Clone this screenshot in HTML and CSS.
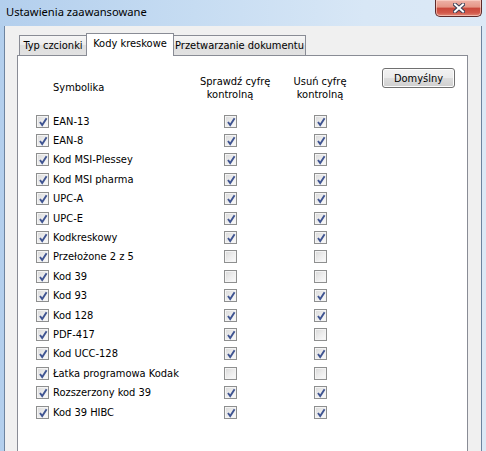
FILE: index.html
```html
<!DOCTYPE html>
<html>
<head>
<meta charset="utf-8">
<link rel="stylesheet" href="styles.css">
</head>
<body>
<div class="window">
  <div class="titlebar">
    <span class="title">Ustawienia zaawansowane</span>
    <span class="close">
      <svg width="12" height="10" viewBox="0 0 12 10"><path d="M2 1.5 L10 8.5 M10 1.5 L2 8.5" stroke="#3a3f55" stroke-width="4" stroke-linecap="square" fill="none"/><path d="M2 1.5 L10 8.5 M10 1.5 L2 8.5" stroke="#fff" stroke-width="2" stroke-linecap="square" fill="none"/></svg>
    </span>
  </div>
  <div class="client">
    <div class="tabs">
      <div class="tab t1">Typ czcionki</div>
      <div class="tab t2 sel">Kody kreskowe</div>
      <div class="tab t3">Przetwarzanie dokumentu</div>
    </div>
    <div class="panel">
      <div class="grid">
        <div class="hsym">Symbolika</div>
        <div class="hcol">Sprawdź cyfrę<br>kontrolną</div>
        <div class="hcol">Usuń cyfrę<br>kontrolną</div>
        <button class="btn">Domyślny</button>

        <div class="lab"><span class="cb on"></span>EAN-13</div><div class="c"><span class="cb on"></span></div><div class="c"><span class="cb on"></span></div><div></div>
        <div class="lab"><span class="cb on"></span>EAN-8</div><div class="c"><span class="cb on"></span></div><div class="c"><span class="cb on"></span></div><div></div>
        <div class="lab"><span class="cb on"></span>Kod MSI-Plessey</div><div class="c"><span class="cb on"></span></div><div class="c"><span class="cb on"></span></div><div></div>
        <div class="lab"><span class="cb on"></span>Kod MSI pharma</div><div class="c"><span class="cb on"></span></div><div class="c"><span class="cb on"></span></div><div></div>
        <div class="lab"><span class="cb on"></span>UPC-A</div><div class="c"><span class="cb on"></span></div><div class="c"><span class="cb on"></span></div><div></div>
        <div class="lab"><span class="cb on"></span>UPC-E</div><div class="c"><span class="cb on"></span></div><div class="c"><span class="cb on"></span></div><div></div>
        <div class="lab"><span class="cb on"></span>Kodkreskowy</div><div class="c"><span class="cb on"></span></div><div class="c"><span class="cb on"></span></div><div></div>
        <div class="lab"><span class="cb on"></span>Przełożone 2 z 5</div><div class="c"><span class="cb"></span></div><div class="c"><span class="cb"></span></div><div></div>
        <div class="lab"><span class="cb on"></span>Kod 39</div><div class="c"><span class="cb"></span></div><div class="c"><span class="cb"></span></div><div></div>
        <div class="lab"><span class="cb on"></span>Kod 93</div><div class="c"><span class="cb on"></span></div><div class="c"><span class="cb on"></span></div><div></div>
        <div class="lab"><span class="cb on"></span>Kod 128</div><div class="c"><span class="cb on"></span></div><div class="c"><span class="cb on"></span></div><div></div>
        <div class="lab"><span class="cb on"></span>PDF-417</div><div class="c"><span class="cb on"></span></div><div class="c"><span class="cb"></span></div><div></div>
        <div class="lab"><span class="cb on"></span>Kod UCC-128</div><div class="c"><span class="cb on"></span></div><div class="c"><span class="cb on"></span></div><div></div>
        <div class="lab"><span class="cb on"></span>Łatka programowa Kodak</div><div class="c"><span class="cb"></span></div><div class="c"><span class="cb"></span></div><div></div>
        <div class="lab"><span class="cb on"></span>Rozszerzony kod 39</div><div class="c"><span class="cb on"></span></div><div class="c"><span class="cb on"></span></div><div></div>
        <div class="lab"><span class="cb on"></span>Kod 39 HIBC</div><div class="c"><span class="cb on"></span></div><div class="c"><span class="cb on"></span></div><div></div>
      </div>
    </div>
  </div>
</div>
</body>
</html>
```
FILE: styles.css
```css
html, body {
  margin: 0;
  padding: 0;
  width: 486px;
  height: 451px;
  overflow: hidden;
}
body {
  background: linear-gradient(to right, #b3cfed 0%, #c6dcf2 40%, #d8e7f6 75%, #dce9f6 100%);
}
.window {
  display: flex;
  flex-direction: column;
  height: 451px;
}
.titlebar {
  height: 26px;
  display: flex;
  justify-content: space-between;
  align-items: flex-start;
  flex: none;
}
.title {
  font-family: "Noto Sans", "Open Sans", sans-serif;
  font-size: 11.2px;
  color: #000;
  margin: 4px 0 0 6px;
  line-height: 16px;
}
.close {
  width: 47px;
  height: 17px;
  margin-right: 4px;
  box-sizing: border-box;
  border: 1px solid #5e2a2a;
  border-top: none;
  border-radius: 0 0 5px 5px;
  background: linear-gradient(#eeb3a8 0%, #e59585 45%, #c9483a 50%, #d2594b 80%, #e08a78 100%);
  box-shadow: inset 0 0 0 1px rgba(255,220,210,0.6);
  display: flex;
  align-items: center;
  justify-content: center;
}
.close svg { display: block; }
.client {
  flex: 1;
  margin: 0 4px 0 4px;
  border-left: 1px solid #6d84a0;
  border-right: 1px solid #6d84a0;
  background: #f0f0f0;
  padding: 7px 0 0 12px;
  display: flex;
  flex-direction: column;
  min-height: 0;
}
.tabs {
  display: flex;
  align-items: flex-end;
  height: 22px;
  padding-left: 2px;
  flex: none;
}
.tab {
  box-sizing: border-box;
  height: 20px;
  border: 1px solid #898c95;
  border-bottom: none;
  background: linear-gradient(#f6f6f6 0%, #ececec 45%, #dedede 50%, #e2e2e2 100%);
  font-family: "DejaVu Sans Condensed", "DejaVu Sans", sans-serif;
  font-stretch: condensed;
  font-size: 11px;
  color: #000;
  text-align: center;
  line-height: 20px;
  margin-right: -1px;
  white-space: nowrap;
}
.t1 { width: 68px; }
.t2 { width: 88px; }
.t3 { width: 133px; }
.tab.sel {
  position: relative;
  z-index: 1;
  height: 23px;
  margin-bottom: -1px;
  background: #fff;
  line-height: 19px;
  padding-bottom: 2px;
}
.panel {
  flex: 1;
  width: 451px;
  box-sizing: border-box;
  border: 1px solid #898c95;
  border-bottom: none;
  background: #fff;
  padding: 12px 0 0 18px;
}
.grid {
  display: grid;
  grid-template-columns: 164px 60px 120px 73px;
  grid-template-rows: 43.5px repeat(16, 19.4px);
  font-family: "DejaVu Sans Condensed", "DejaVu Sans", sans-serif;
  font-stretch: condensed;
  font-size: 11px;
  color: #000;
}
.hsym {
  padding: 13px 0 0 17px;
  line-height: 13px;
}
.hcol {
  text-align: center;
  padding-top: 7px;
  line-height: 13px;
  white-space: nowrap;
}
.btn {
  margin-left: 2px;
  width: 73px;
  height: 20px;
  align-self: start;
  box-sizing: border-box;
  border: 1px solid #707070;
  border-radius: 3px;
  background: linear-gradient(#f2f2f2 0%, #ebebeb 50%, #dddddd 51%, #cfcfcf 100%);
  box-shadow: inset 0 0 0 1px #fcfcfc;
  font-family: "DejaVu Sans Condensed", "DejaVu Sans", sans-serif;
  font-stretch: condensed;
  font-size: 11px;
  color: #000;
  padding: 0;
}
.lab {
  display: flex;
  align-items: center;
  white-space: nowrap;
}
.lab .cb { margin-right: 4px; }
.c {
  display: flex;
  align-items: center;
  justify-content: center;
}
.cb {
  width: 13px;
  height: 13px;
  box-sizing: border-box;
  border: 1px solid #8e8f8f;
  background: linear-gradient(135deg, #d8d8d8 0%, #ececec 50%, #fbfbfb 100%);
  box-shadow: inset 0 0 0 1px #f4f4f4;
  flex: none;
  position: relative;
}
.cb.on::after {
  content: "";
  position: absolute;
  left: 1px;
  top: 1px;
  width: 10px;
  height: 10px;
  background: url("data:image/svg+xml;utf8,<svg xmlns='http://www.w3.org/2000/svg' width='10' height='10' viewBox='0 0 10 10'><path d='M2 5 L4.2 8 L8.6 1.3' stroke='%233f5491' stroke-width='1.9' fill='none'/></svg>") no-repeat;
}
```
